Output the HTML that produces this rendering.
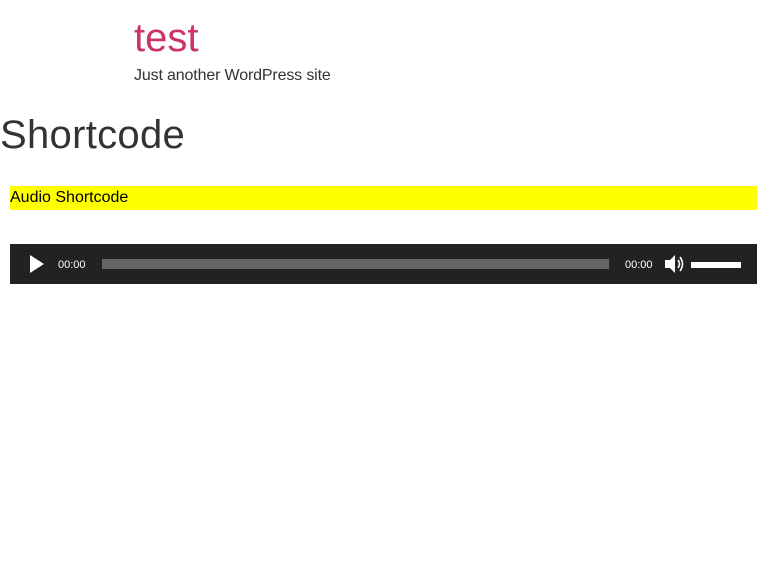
<html><head><style>
body{margin:0;background:#fff;font-family:"Liberation Sans",sans-serif;}
.t{position:absolute;left:134px;top:16px;font-size:40px;color:#cc3366;}
.d{position:absolute;left:134px;top:67px;font-size:16px;color:#333;letter-spacing:-0.15px;}
h1{position:absolute;left:0;top:113px;margin:0;font-size:40px;font-weight:normal;color:#333;letter-spacing:0.3px;}
.y{position:absolute;left:10px;top:186px;width:747px;height:24px;background:#ff0;font-size:16px;line-height:24px;color:#000;}
.p{position:absolute;left:10px;top:244px;width:747px;height:40px;background:#222;}
.tm{position:absolute;top:15px;font-size:11px;color:#fff;}
</style></head><body>
<div class="t">test</div>
<div class="d">Just another WordPress site</div>
<h1>Shortcode</h1>
<div class="y">Audio Shortcode</div>
<div class="p">
<svg style="position:absolute;left:19px;top:11px" width="16" height="18"><polygon points="1,0 15,9 1,18" fill="#fff"/></svg>
<div class="tm" style="left:48px">00:00</div>
<div style="position:absolute;left:92px;top:15px;width:507px;height:10px;background:#666"></div>
<div class="tm" style="left:615px">00:00</div>
<svg style="position:absolute;left:655px;top:10px" width="20" height="20"><polygon points="0,6 5,6 10,1 10,19 5,14 0,14" fill="#fff"/><path d="M13 6 Q16 10 13 14 M15 3 Q20 10 15 17" stroke="#fff" stroke-width="1.6" fill="none"/></svg>
<div style="position:absolute;left:681px;top:18px;width:50px;height:6px;background:#fff"></div>
</div>
</body></html>
